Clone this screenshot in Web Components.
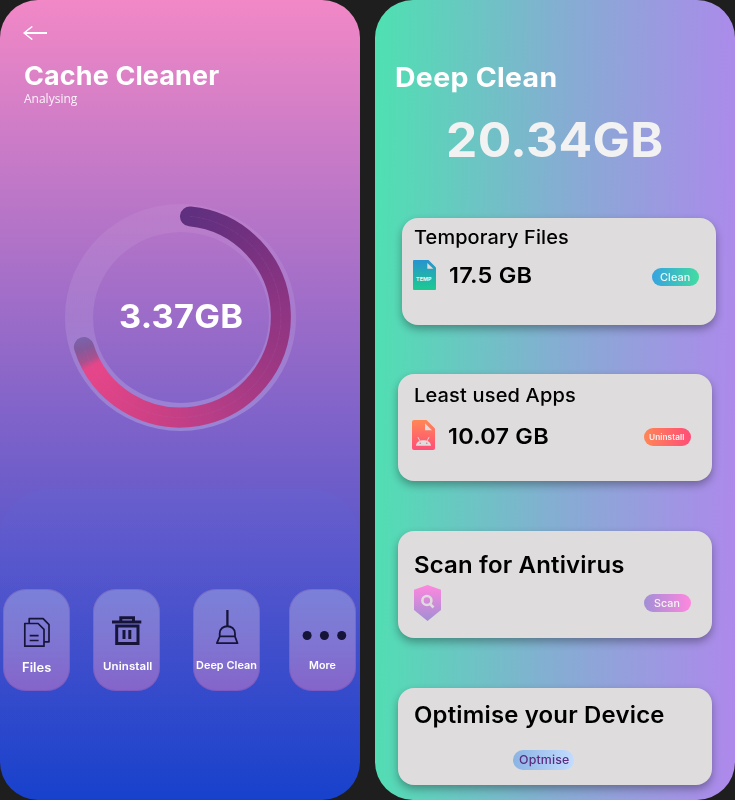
<!DOCTYPE html>
<html lang="en">
<head>
<meta charset="utf-8">
<title>Cache Cleaner</title>
<style>
html,body{margin:0;height:800px;background:#1e1e1e;overflow:hidden}
body{font-family:Inter,"Open Sans",sans-serif}
cleaner-app{height:800px}
</style>
</head>
<body>
<cleaner-app></cleaner-app>
<script>
function define(name, html, setup) {
  const t = document.createElement('template');
  t.innerHTML = html;
  customElements.define(name, class extends HTMLElement {
    constructor() {
      super();
      this.attachShadow({ mode: 'open' }).append(t.content.cloneNode(true));
    }
    connectedCallback() { if (setup) setup.call(this, this.shadowRoot); }
  });
}

/* One line of text widened to an exact ink width: mostly by glyph width, the rest by tracking. */
define('fit-text', `<style>
:host{display:block;flex:none;white-space:pre;line-height:1.2;font-family:Inter,"Open Sans",sans-serif}
span{display:inline-block;line-height:inherit;vertical-align:top;transform-origin:0 0}</style><span><slot></slot></span>`, function (root) {
  const size = +this.getAttribute('size'), weight = this.getAttribute('weight') || 400, width = +this.getAttribute('w');
  const text = this.textContent, span = root.querySelector('span');
  const c = document.createElement('canvas').getContext('2d');
  c.font = weight + ' ' + size + 'px Inter, "Open Sans", sans-serif';
  const m = c.measureText(text);
  const ink = m.actualBoundingBoxLeft + m.actualBoundingBoxRight;
  const f = 1 + (width / ink - 1) * 0.8;
  span.style.transform = 'scaleX(' + f + ')';
  span.style.letterSpacing = ((width / f - ink) / (text.length - 1)) + 'px';
  span.style.marginLeft = m.actualBoundingBoxLeft * f + 'px';
  this.style.cssText += ';font-size:' + size + 'px;font-weight:' + weight + ';width:' + width + 'px;height:' + size * 1.2 + 'px';
});

define('progress-ring', `<style>
:host{display:grid;width:231px;height:227px;margin-left:65px;place-items:center}
svg,fit-text{grid-area:1/1}
svg{width:231px;height:227px;overflow:visible}
.sweep{width:231px;height:227px;background:conic-gradient(from 0deg at 115.5px 113px,#5e2f80 0deg,#6c307f 30deg,#8c3482 80deg,#9b3783 115deg,#b83e87 165deg,#cd4084 195deg,#e54689 238deg,#e54689 241deg,#a9508f 245deg,#83599b 252deg,#7c63ab 258deg,#7c63ab 300deg,#5e2f80 330deg)}
fit-text{color:#fff;margin:0 0 1px 2px}
</style>
<svg viewBox="0 0 231 227">
<defs><linearGradient id="t" x2="0" y2="1"><stop stop-color="#fff" stop-opacity=".055"/><stop offset=".5" stop-color="#fff" stop-opacity=".1"/><stop offset="1" stop-color="#fff" stop-opacity=".22"/></linearGradient></defs>
<path fill="url(#t)" fill-rule="evenodd" d="M0 113.500a115.500 113.500 0 1 0 231 0a115.500 113.500 0 1 0-231 0zM28 113.500a88 85.500 0 1 0 176 0a88 85.500 0 1 0-176 0z"/>
<mask id="m" maskUnits="userSpaceOnUse" x="0" y="0" width="231" height="227"><path d="M125 12.400A100.800 100.800 0 1 1 18.900 143" fill="none" stroke="#fff" stroke-width="20" stroke-linecap="round"/></mask>
<g mask="url(#m)"><foreignObject width="231" height="227"><div class="sweep"></div></foreignObject></g>
<path d="M125 12.400A100.800 100.800 0 1 1 18.900 143" fill="none" stroke="#a77bbb" stroke-opacity=".28" stroke-width=".5" stroke-dasharray="5 1"/>
</svg>
<fit-text size="33" weight="750" w="122">3.37GB</fit-text>`);

define('action-tile', `<style>
:host{display:flex;flex-direction:column;align-items:center;box-sizing:border-box;width:67px;height:101.5px;border-radius:23px;background:linear-gradient(#7b80d8,#7e78d3 45%,#8564ca);box-shadow:inset 0 0 0 1px rgba(105,70,165,.3);color:#fff;flex:none}
::slotted(svg){display:block;width:67px;height:70px;flex:none}
</style><slot></slot>`);

define('cache-screen', `<style>
:host{display:flex;flex-direction:column;width:360px;height:800px;border-radius:38px;overflow:hidden;background:linear-gradient(#f288c6,#1741cc);color:#fff}
header{height:178px;padding:26px 0 0 23px}
header svg{display:block}
h1{margin:19.8px 0 0 2px;font:inherit}
p{margin:.5px 0 0 1px;font:12px/16px "Open Sans",sans-serif;opacity:.9}
nav{margin-top:58px;flex:1;display:flex;align-items:flex-start;padding:100px 0 0 3.3px;border-radius:50px 50px 0 0;background:linear-gradient(rgba(90,110,225,.13),rgba(60,80,220,.06) 40%,transparent)}
</style>
<header>
<svg width="25" height="14" viewBox="0 0 25 14" fill="none" stroke="#fff"><path stroke-width="2" d="M1.500 7H24"/><path stroke-width="1.400" d="M9.300.4 1 7l8.300 6.600"/></svg>
<h1><fit-text size="26" weight="750" w="194.500">Cache Cleaner</fit-text></h1>
<p>Analysing</p>
</header>
<progress-ring></progress-ring>
<nav>
<action-tile><svg viewBox="0 0 67 70" fill="none" stroke="#17143a" stroke-width="1.700" stroke-linejoin="round"><path d="M21.800 34.500V57.200h19.200V40.300l-5.900-5.800z M26.200 34.500V29.700H40.100L46 35.700V52.800H41.300M26.700 46.700h8.900M26.700 51.500h8.900"/></svg><fit-text style="margin-top:1px" size="12.5" weight="600" w="29.500">Files</fit-text></action-tile>
<action-tile style="margin-left:22.700px"><svg viewBox="0 0 67 70" fill="none" stroke="#17143a"><path stroke-width="3" d="M19 32.900h29.300M23.700 37H45V54.400H23.700zM27.800 32V28.700H40.500V32M31 41v9M36.800 41v9"/></svg><fit-text style="margin:1.700px 0 0 2.500px" size="10.800" weight="600" w="49.500">Uninstall</fit-text></action-tile>
<action-tile style="margin-left:33px"><svg viewBox="0 0 67 70" fill="none" stroke="#17143a" stroke-width="1.800" stroke-linejoin="round"><path stroke-width="2.300" d="M34.400 21V37.500"/><path d="M26.700 47.300V44.500C26.700 34.800 42 34.800 42 44.500V47.300zM26.700 47.500 23.900 54.200H44.500L42 47.500"/></svg><fit-text style="margin-top:.9px" size="10.600" weight="600" w="60.500">Deep Clean</fit-text></action-tile>
<action-tile style="margin-left:29px"><svg viewBox="0 0 67 70" fill="#17143a"><circle cx="18.100" cy="46.500" r="4.500"/><circle cx="35.400" cy="46.500" r="4.500"/><circle cx="52.700" cy="46.500" r="4.500"/></svg><fit-text style="margin-top:.9px" size="10.600" weight="600" w="26.500">More</fit-text></action-tile>
</nav>`);

define('pill-button', `<style>
:host{display:flex;box-sizing:border-box;align-items:center;justify-content:center;width:47px;height:18px;border-radius:10px;padding-top:1px;color:#f5f5f5;flex:none}
</style><slot></slot>`);

define('clean-card', `<style>
:host{display:block;box-sizing:border-box;width:314px;height:107px;margin:0 0 50px 23px;border-radius:16px;background:#dedcdd;box-shadow:0 4px 8px rgba(0,0,0,.32);color:#000;flex:none}
h2{margin:0;font:inherit;padding:var(--title) 0 0 var(--tx,17px);height:var(--row,46px);box-sizing:border-box}
.row{display:flex;align-items:center;height:30px;padding:0 var(--right,21px) 0 var(--left,14px)}
::slotted(pill-button){margin:4px 0 0 auto}
</style><h2><slot name="title"></slot></h2><div class="row"><slot></slot></div>`);

define('deep-screen', `<style>
:host{display:flex;flex-direction:column;width:360px;height:800px;border-radius:38px;overflow:hidden;background:linear-gradient(91deg,#4ee1b1,#84aed2 50%,#ae88ec)}
header{height:218px;box-sizing:border-box;padding:62px 0 0 21.500px;color:#fff;flex:none}
h1{margin:0;font:inherit}
header>fit-text{margin:17.400px 0 0 51.500px;color:#f2f2f2}
svg{display:block;flex:none}
</style>
<header><h1><fit-text size="26.500" weight="750" w="159.500">Deep Clean</fit-text></h1>
<fit-text size="47.500" weight="750" w="213.500">20.34GB</fit-text></header>
<clean-card style="--title:9px;--row:42px;--left:11px;--right:17px;--tx:12.200px;margin:0 0 49px 27px">
<fit-text slot="title" size="19" weight="450" w="154.500">Temporary Files</fit-text>
<svg width="23" height="30" viewBox="0 0 23 30"><defs><linearGradient id="a" x2="0" y2="1"><stop stop-color="#2893cf"/><stop offset="1" stop-color="#1bcb91"/></linearGradient></defs><path fill="url(#a)" d="M1 0H15.500L23 7.500V29a1 1 0 0 1-1 1H1a1 1 0 0 1-1-1V1a1 1 0 0 1 1-1z"/><path fill="#dedcdd" d="M14.300 3V8.800H20.300z"/><text x="3" y="20.500" textLength="15.500" font-family="Inter, sans-serif" font-weight="700" font-size="5.300" fill="#edf5f4">TEMP</text></svg>
<fit-text style="margin-left:14px" size="22" weight="600" w="81.500">17.5 GB</fit-text>
<pill-button style="background:linear-gradient(90deg,#36a3e1,#43dca1)"><fit-text style="margin:1px 1px 0 0" size="10.500" weight="500" w="30">Clean</fit-text></pill-button>
</clean-card>
<clean-card style="--title:11.300px">
<fit-text slot="title" size="19" weight="450" w="160.500">Least used Apps</fit-text>
<svg width="23" height="30" viewBox="0 0 23 30"><defs><linearGradient id="b" x2="0" y2="1"><stop stop-color="#ff8855"/><stop offset="1" stop-color="#ff4d78"/></linearGradient></defs><path fill="url(#b)" d="M2 0H14.500L23 8.500V28a2 2 0 0 1-2 2H2a2 2 0 0 1-2-2V2a2 2 0 0 1 2-2z"/><path fill="#dedcdd" d="M13 3.300V10.300H20zM4 25.700C4.300 18.500 18.700 18.500 19 25.700z"/><path stroke="#dedcdd" stroke-width=".9" stroke-linecap="round" d="M6 17.300 8 21M17 17.300 15 21"/><circle cx="8.200" cy="23.300" r=".7" fill="#ff567a"/><circle cx="14.800" cy="23.300" r=".7" fill="#ff567a"/></svg>
<fit-text style="margin:2px 0 0 14.500px" size="22" weight="600" w="99">10.07 GB</fit-text>
<pill-button style="background:linear-gradient(90deg,#ff8656,#ff4d78)"><fit-text style="margin-right:1px" size="7.500" weight="600" w="35.500">Uninstall</fit-text></pill-button>
</clean-card>
<clean-card style="--title:20px;--row:57px;--left:16px">
<fit-text slot="title" size="22.500" weight="600" w="209">Scan for Antivirus</fit-text>
<svg style="align-self:flex-start;margin-top:-3px" width="27" height="36" viewBox="0 0 27 36"><defs><linearGradient id="c" x2="0" y2="1"><stop stop-color="#ff87df"/><stop offset="1" stop-color="#a18fd4"/></linearGradient></defs><path fill="url(#c)" d="M13.500 0 27 4.800V25L13.500 36 0 25V4.800z"/><g fill="none" stroke="#dedcdd" stroke-width="2.600"><circle cx="12.900" cy="15.500" r="4.500"/><path d="M16 18.900 19.500 22.500"/></g></svg>
<pill-button style="margin-top:0;background:linear-gradient(90deg,#a18fd6,#ff87df)"><fit-text style="margin:1px 1px 0 0" size="10.500" weight="500" w="25.500">Scan</fit-text></pill-button>
</clean-card>
<clean-card style="--title:13px;--row:57px;--left:115px;height:97px;margin-bottom:0">
<fit-text slot="title" size="22.500" weight="600" w="249">Optimise your Device</fit-text>
<pill-button style="width:61px;height:20px;margin:0;background:linear-gradient(90deg,#8bb4e4,#c3dcff);color:#5b2b80"><fit-text style="margin-left:2px" size="11.500" weight="500" w="50.500">Optmise</fit-text></pill-button>
</clean-card>`);

define('cleaner-app', `<style>:host{display:flex;gap:15px;width:735px}cache-screen,deep-screen{flex:none}</style><cache-screen></cache-screen><deep-screen></deep-screen>`);
</script>
</body>
</html>
